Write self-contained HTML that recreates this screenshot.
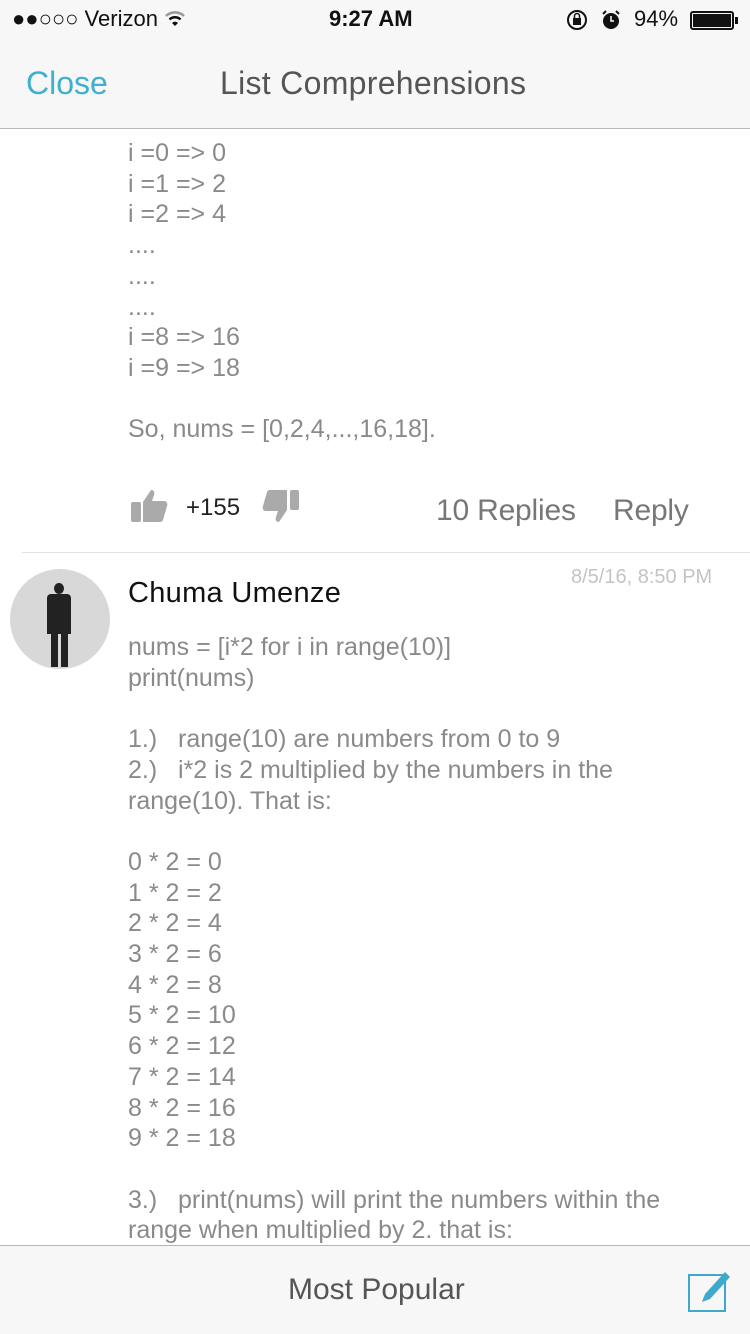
<!DOCTYPE html>
<html><head><meta charset="utf-8"><style>
*{margin:0;padding:0;box-sizing:border-box}
body{width:750px;height:1334px;overflow:hidden;background:#fff;font-family:"Liberation Sans",sans-serif;position:relative}
.abs{position:absolute}
.txt{color:#8a8a8a;font-size:25px;line-height:30.7px;white-space:pre;letter-spacing:0}
</style></head><body>
<div class="abs" style="left:0;top:0;width:750px;height:129px;background:#f7f7f7;border-bottom:1px solid #b8b8b8"></div>
<div class="abs" style="left:12px;top:6px;font-size:22px;color:#111">●●○○○ Verizon
<svg width="22" height="18" viewBox="0 0 22 18" style="vertical-align:-1px"><path d="M2 7a13 13 0 0 1 18 0" stroke="#999" stroke-width="2.5" fill="none"/><path d="M5.5 10.5a8 8 0 0 1 11 0" stroke="#111" stroke-width="2.5" fill="none"/><path d="M11 17l-3-3a4 4 0 0 1 6 0z" fill="#111"/></svg></div>
<div class="abs" style="left:329px;top:6px;font-size:22px;font-weight:bold;color:#111">9:27 AM</div>
<svg class="abs" style="left:566px;top:9px" width="56" height="22" viewBox="0 0 56 22"><circle cx="11" cy="11" r="9" fill="none" stroke="#111" stroke-width="2"/><rect x="7" y="9" width="8" height="7" fill="#111"/><path d="M8.5 9V7a2.5 2.5 0 0 1 5 0v2" stroke="#111" stroke-width="1.5" fill="none"/><circle cx="45" cy="12" r="8" fill="#111"/><path d="M45 7v5h3" stroke="#fff" stroke-width="1.5" fill="none"/><path d="M37 5l3-3M53 5l-3-3" stroke="#111" stroke-width="2"/></svg>
<div class="abs" style="left:634px;top:6px;font-size:22px;color:#111">94%</div>
<div class="abs" style="left:690px;top:11px;width:44px;height:19px;border:2px solid #111;border-radius:3px;padding:1px"><div style="width:38px;height:13px;background:#111"></div></div>
<div class="abs" style="left:735px;top:17px;width:3px;height:7px;background:#111"></div>
<div class="abs" style="left:26px;top:65px;font-size:32px;color:#3fb0cf">Close</div>
<div class="abs" style="left:220px;top:65px;font-size:32px;color:#555;letter-spacing:0.3px">List Comprehensions</div>

<div class="abs txt" style="left:128px;top:138px">i =0 =&gt; 0
i =1 =&gt; 2
i =2 =&gt; 4
....
....
....
i =8 =&gt; 16
i =9 =&gt; 18

So, nums = [0,2,4,...,16,18].</div>

<svg class="abs" style="left:130px;top:488px" width="40" height="36" viewBox="0 0 40 36"><rect x="1" y="14" width="10" height="20" rx="2" fill="#aaa"/><path d="M13 14l8-12c3 0 4 2 3 5l-2 6h12c3 0 4 3 3 5l-4 14c-1 2-2 2-4 2H13z" fill="#aaa"/></svg>
<div class="abs" style="left:186px;top:494px;font-size:24px;color:#222">+155</div>
<svg class="abs" style="left:262px;top:488px;transform:scaleY(-1)" width="38" height="36" viewBox="0 0 38 36"><rect x="28" y="14" width="9" height="20" rx="2" fill="#aaa"/><path d="M25 14l-8-12c-3 0-4 2-3 5l2 6H4c-3 0-4 3-3 5l4 14c1 2 2 2 4 2h16z" fill="#aaa"/></svg>
<div class="abs" style="left:436px;top:494px;font-size:30px;color:#777;letter-spacing:-0.2px">10 Replies</div>
<div class="abs" style="left:613px;top:494px;font-size:30px;color:#777;letter-spacing:-0.2px">Reply</div>
<div class="abs" style="left:22px;top:552px;width:728px;height:1px;background:#e3e3e3"></div>

<div class="abs" style="left:10px;top:569px;width:100px;height:100px;border-radius:50%;background:#d8d8d8;overflow:hidden">
<div style="position:absolute;left:44px;top:14px;width:10px;height:11px;border-radius:50%;background:#222"></div>
<div style="position:absolute;left:37px;top:25px;width:24px;height:40px;background:#222;border-radius:4px 4px 0 0"></div>
<div style="position:absolute;left:41px;top:64px;width:7px;height:34px;background:#222"></div>
<div style="position:absolute;left:51px;top:64px;width:7px;height:34px;background:#222"></div></div>
<div class="abs" style="left:128px;top:577px;font-size:29px;color:#111;letter-spacing:0.3px">Chuma Umenze</div>
<div class="abs" style="left:571px;top:566px;font-size:20px;color:#c4c4c4">8/5/16, 8:50 PM</div>

<div class="abs txt" style="left:128px;top:632px">nums = [i*2 for i in range(10)]
print(nums)

1.)   range(10) are numbers from 0 to 9
2.)   i*2 is 2 multiplied by the numbers in the
range(10). That is:

0 * 2 = 0
1 * 2 = 2
2 * 2 = 4
3 * 2 = 6
4 * 2 = 8
5 * 2 = 10
6 * 2 = 12
7 * 2 = 14
8 * 2 = 16
9 * 2 = 18

3.)   print(nums) will print the numbers within the
range when multiplied by 2. that is:</div>

<div class="abs" style="left:0;top:1245px;width:750px;height:89px;background:#f7f7f7;border-top:1px solid #b5b5b5"></div>
<div class="abs" style="left:288px;top:1273px;font-size:30px;color:#555">Most Popular</div>
<svg class="abs" style="left:686px;top:1264px" width="50" height="50" viewBox="0 0 50 50"><rect x="3" y="11" width="36" height="36" fill="none" stroke="#3fa9c9" stroke-width="2"/><path d="M16 38l3-8 20-22 5 5-20 22z" fill="#3fa9c9"/></svg>
</body></html>
